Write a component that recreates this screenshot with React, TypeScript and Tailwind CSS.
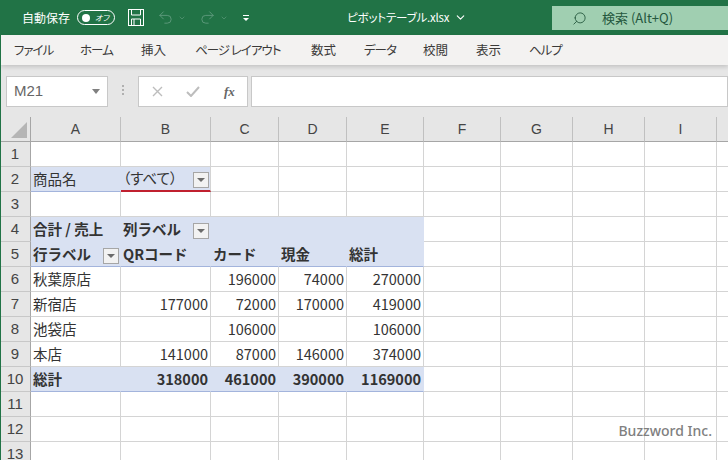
import { ChevronDown, Search, Undo2, Redo2 } from "lucide-react";

const JP = "font-['Noto_Sans_CJK_JP','Noto_Sans',sans-serif]";
const PALT = "[font-feature-settings:'palt']";

const COLS = ["A", "B", "C", "D", "E", "F", "G", "H", "I", ""];
const TABS: [string, string][] = [
  ["ファイル", "w-[66px] tracking-[-1px]"],
  ["ホーム", "w-[61px] tracking-[-1px]"],
  ["挿入", "w-[54px]"],
  ["ページ レイアウト", "w-[116px] tracking-[-1px]"],
  ["数式", "w-[53px]"],
  ["データ", "w-[59px] tracking-[-1px]"],
  ["校閲", "w-[53px]"],
  ["表示", "w-[53px]"],
  ["ヘルプ", "w-[60px] tracking-[-1px]"],
];

type Cell = {
  t?: string;
  right?: boolean;
  bold?: boolean;
  fill?: boolean;
  filter?: boolean;
  noR?: boolean;
  noB?: boolean;
  blueB?: boolean;
  redB?: boolean;
  palt?: boolean;
};

function num(t?: string, bold = false, fill = false): Cell {
  return { t, right: true, bold, fill, noR: fill, noB: fill, blueB: fill };
}

function row(cells: Cell[]): Cell[] {
  const out = [...cells];
  while (out.length < 10) out.push({});
  return out;
}

const h = (t?: string, filter?: boolean, bottom?: boolean): Cell => ({
  t,
  bold: true,
  fill: true,
  noR: true,
  noB: !bottom,
  blueB: bottom,
  filter,
});

const ROWS: Cell[][] = [
  row([]),
  row([
    { t: "商品名", fill: true, noR: true, blueB: true },
    { t: "（すべて）", fill: true, filter: true, redB: true, palt: true },
  ]),
  row([]),
  row([h("合計 / 売上"), h("列ラベル", true), h(), h(), h()]),
  row([h("行ラベル", true, true), h("QRコード", false, true), h("カード", false, true), h("現金", false, true), h("総計", false, true)]),
  row([{ t: "秋葉原店" }, {}, num("196000"), num("74000"), num("270000")]),
  row([{ t: "新宿店" }, num("177000"), num("72000"), num("170000"), num("419000")]),
  row([{ t: "池袋店" }, {}, num("106000"), {}, num("106000")]),
  row([{ t: "本店" }, num("141000"), num("87000"), num("146000"), num("374000")]),
  row([
    { t: "総計", bold: true, fill: true, noR: true, blueB: true },
    num("318000", true, true),
    num("461000", true, true),
    num("390000", true, true),
    num("1169000", true, true),
  ]),
  row([]),
  row([]),
  row([]),
];

function FilterButton() {
  return (
    <span className="absolute right-[1px] bottom-[2px] flex h-[16px] w-[16px] items-center justify-center border border-[#a6a6a6] bg-[#f2f2f2]">
      <span className="h-0 w-0 border-x-[4px] border-t-[4px] border-x-transparent border-t-[#6b6b6b]" />
    </span>
  );
}

function GridCell({ cell }: { cell: Cell }) {
  const border = cell.redB
    ? "border-b-2 border-b-[#c0202f]"
    : cell.blueB
      ? "border-b border-b-[#a3b4dc]"
      : cell.noB
        ? "border-b border-b-[#d9e1f2]"
        : "border-b border-b-[#d4d4d4]";
  return (
    <div
      className={`relative flex items-center overflow-visible whitespace-nowrap border-r px-[2px] pb-[1px] text-[14.5px] text-[#333] ${
        cell.noR ? "border-r-[#d9e1f2]" : "border-r-[#d4d4d4]"
      } ${border} ${cell.fill ? "bg-[#d9e1f2]" : "bg-white"} ${cell.right ? "justify-end" : ""} ${
        cell.bold ? "font-bold text-[#222]" : ""
      } ${cell.palt ? PALT : ""}`}
    >
      {cell.t}
      {cell.filter && <FilterButton />}
    </div>
  );
}

export default function App() {
  return (
    <div className={`relative h-[460px] w-[728px] overflow-hidden border-l border-l-[#217346] bg-[#e6e6e6] ${JP}`}>
      <div className={`-ml-px flex h-[35px] items-center whitespace-nowrap bg-[#217346] text-white ${PALT}`}>
        <span className="ml-[22px] w-[48px] text-[12px]">自動保存</span>
        <span className="ml-[7px] flex h-[15px] w-[38px] shrink-0 items-center justify-between rounded-full border border-white pl-[4px] pr-[5px]">
          <span className="h-[8px] w-[8px] rounded-full bg-white" />
          <span className="text-[8px] italic">オフ</span>
        </span>
        <svg className="ml-[13px] shrink-0" width="16" height="17" viewBox="0 0 16 17" fill="none" stroke="#fff" strokeWidth="1">
          <rect x="0.5" y="0.5" width="15" height="16" />
          <path d="M3.5 1v5h9V1M3.5 16v-6h9v6M6 10v6" />
        </svg>
        <Undo2 className="ml-[13px] shrink-0 text-[#5f9b7d]" size={17} strokeWidth={1.3} />
        <ChevronDown className="ml-[4px] shrink-0 text-[#5f9b7d]" size={8} />
        <Redo2 className="ml-[13px] shrink-0 text-[#5f9b7d]" size={17} strokeWidth={1.3} />
        <ChevronDown className="ml-[4px] shrink-0 text-[#5f9b7d]" size={8} />
        <span className="ml-[15px] flex shrink-0 flex-col items-center gap-[2px]">
          <span className="h-px w-[6px] bg-white" />
          <span className="h-0 w-0 border-x-[3px] border-t-[3px] border-x-transparent border-t-white" />
        </span>
        <span className="ml-[98px] w-[105px] shrink-0 text-[11.5px] tracking-[-0.2px]">ピボットテーブル.xlsx</span>
        <ChevronDown className="ml-[2px] shrink-0" size={13} />
        <div className="ml-[85px] mt-[1px] flex h-[24px] w-[176px] shrink-0 items-center bg-[#a0cfb1] pl-[20px] text-[13px] text-[#24573d]">
          <Search className="-scale-x-100" size={15} strokeWidth={1.4} />
          <span className="ml-[15px]">検索 (Alt+Q)</span>
        </div>
      </div>

      <div className={`flex h-[30px] items-center bg-[#f3f2f1] pl-[13px] text-[12.5px] text-[#3b3a39] shadow-[0_2px_4px_rgba(0,0,0,0.15)] ${PALT}`}>
        {TABS.map(([label, w]) => (
          <span key={label} className={`${w} shrink-0 whitespace-nowrap`}>
            {label}
          </span>
        ))}
      </div>

      <div className="flex h-[52px] items-start pl-[5px] pt-[11px]">
        <div className="flex h-[31px] w-[102px] items-center justify-between border border-[#c8c8c8] bg-white pl-[7px] pr-[7px] font-['Liberation_Sans',sans-serif] text-[15px] text-[#666]">
          M21
          <span className="h-0 w-0 border-x-[4px] border-t-[5px] border-x-transparent border-t-[#808080]" />
        </div>
        <span className="ml-[14px] mt-[9px] flex flex-col gap-[2px]">
          <span className="h-[2px] w-[2px] bg-[#b0b0b0]" />
          <span className="h-[2px] w-[2px] bg-[#b0b0b0]" />
          <span className="h-[2px] w-[2px] bg-[#b0b0b0]" />
        </span>
        <div className="ml-[14px] flex h-[31px] w-[110px] items-center border border-[#c8c8c8] bg-white pl-[13px]">
          <svg width="11" height="11" viewBox="0 0 11 11" fill="none" stroke="#bdbdbd" strokeWidth="1.4">
            <path d="M1 1l9 9M10 1l-9 9" />
          </svg>
          <svg className="ml-[23px]" width="14" height="11" viewBox="0 0 14 11" fill="none" stroke="#bdbdbd" strokeWidth="2">
            <path d="M1 6l4 4 8-9" />
          </svg>
          <span className="ml-[24px] font-['Liberation_Serif',serif] text-[13px] font-bold italic text-[#666]">fx</span>
        </div>
        <div className="ml-[3px] h-[31px] flex-1 border border-[#c8c8c8] bg-white" />
      </div>

      <div className="-ml-px grid grid-cols-[31px_90px_90px_68px_68px_77px_77px_72px_72px_72px_12px] grid-rows-[25px_repeat(13,25px)] text-[#444]">
        <div className="relative border-r border-b border-[#a6a6a6] bg-[#e6e6e6]">
          <span className="absolute right-[3px] bottom-[3px] h-0 w-0 border-b-[16px] border-l-[16px] border-b-[#b5b5b5] border-l-transparent" />
        </div>
        {COLS.map((c, i) => (
          <div
            key={i}
            className="flex items-center justify-center border-r border-b border-r-[#c0c0c0] border-b-[#a6a6a6] bg-[#e6e6e6] font-['Liberation_Sans',sans-serif] text-[14px]"
          >
            {c}
          </div>
        ))}
        {ROWS.map((cells, r) => (
          <div key={r} className="contents">
            <div className="flex items-center justify-center border-r border-b border-r-[#a6a6a6] border-b-[#c8c8c8] bg-[#e6e6e6] font-['Liberation_Sans',sans-serif] text-[15px]">
              {r + 1}
            </div>
            {cells.map((cell, c) => (
              <GridCell key={c} cell={cell} />
            ))}
          </div>
        ))}
      </div>

      <span className="absolute right-[16px] bottom-[19px] font-['Noto_Sans',sans-serif] text-[14px] font-medium text-[#808080]">
        Buzzword Inc.
      </span>
    </div>
  );
}
